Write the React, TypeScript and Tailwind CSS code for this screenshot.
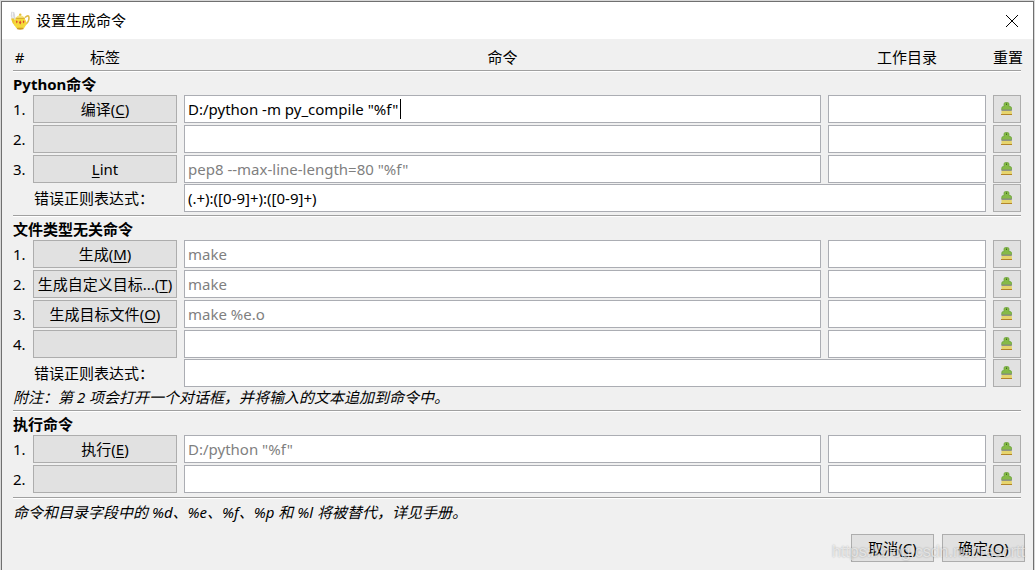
import { useState } from "react";

interface CommandRow {
  label?: string;
  mnemonic?: string;
  command?: string;
  placeholder?: string;
  caret?: boolean;
}

interface CommandSection {
  title: string;
  rows: CommandRow[];
  regex?: string;
  note?: string;
}

const sections: CommandSection[] = [
  {
    title: "Python命令",
    rows: [
      { label: "编译", mnemonic: "C", command: 'D:/python -m py_compile "%f"', caret: true },
      {},
      { label: "Lint", placeholder: 'pep8 --max-line-length=80 "%f"' },
    ],
    regex: "(.+):([0-9]+):([0-9]+)",
  },
  {
    title: "文件类型无关命令",
    rows: [
      { label: "生成", mnemonic: "M", placeholder: "make" },
      { label: "生成自定义目标...", mnemonic: "T", placeholder: "make" },
      { label: "生成目标文件", mnemonic: "O", placeholder: "make %e.o" },
      {},
    ],
    regex: "",
    note: "附注：第 2 项会打开一个对话框，并将输入的文本追加到命令中。",
  },
  {
    title: "执行命令",
    rows: [{ label: "执行", mnemonic: "E", placeholder: 'D:/python "%f"' }, {}],
  },
];

const rowGrid = "grid grid-cols-[13px_144px_1fr_158px_28px] gap-x-[7px]";
const buttonStyle = "h-7 border border-[#adadad] bg-[#e1e1e1] text-center whitespace-nowrap";
const inputStyle =
  "h-7 w-full min-w-0 border border-[#abadb3] bg-white px-[3px] outline-none placeholder:text-[#7f7f7f]";

function TeapotIcon() {
  return (
    <svg viewBox="0 0 20 20" className="h-5 w-5" aria-hidden="true">
      <path d="M1.2 0.8 Q0 4.500 2 8.500 L5.200 8.500 Q5.800 4 4.200 1Z" fill="#d9dade" />
      <path d="M2.5 1.500 Q2 4.500 3.200 7" fill="none" stroke="#f6f6f8" />
      <path d="M15 6.500 Q19 3 19 7 Q18.800 11.500 15 13.500" fill="none" stroke="#dfba45" strokeWidth="1.600" />
      <path d="M1 7.500 L4 7.500 L6 12 L5 15 Q2 12.500 1 7.500Z" fill="#ecc931" />
      <ellipse cx="10.200" cy="12" rx="6.300" ry="6" fill="#f5d93a" />
      <path d="M5.500 7 Q7 4.500 10 4 Q13 4.500 15 7Z" fill="#f8e67c" />
      <circle cx="10.200" cy="3.600" r="1.200" fill="#e5c03a" />
      <path d="M5.500 7.300 H15" stroke="#d0a325" strokeWidth="0.900" />
      <path d="M6.500 18 Q10 19.500 14 18 L13 16.800 H7.500Z" fill="#cf9d20" />
      <path d="M10.200 9.500 L11.400 11.500 L10.200 13.500 L9 11.500Z M6.800 9.200 L7.700 10.800 L6.800 12.400 L5.900 10.800Z M13.600 9.200 L14.500 10.800 L13.600 12.400 L12.700 10.800Z" fill="#dc4630" />
    </svg>
  );
}

function BrushIcon() {
  return (
    <svg viewBox="0 0 12 14" className="mx-auto h-3.5 w-3" aria-hidden="true">
      <path
        d="M3 2 Q3 0.500 4.500 0.500 H6.500 Q8 0.500 8 2 V4.500 H9 Q10.500 4.500 10.500 6 V8 H0.800 V6 Q0.800 4.500 2.300 4.500 H3Z"
        fill="#86ba48"
        stroke="#67a035"
        strokeWidth="0.700"
      />
      <rect x="5" y="1.500" width="1" height="1.500" fill="#3f6d1e" />
      <path d="M0.500 7.500 H10.700 V9 H0.500Z" fill="#8f9382" />
      <path d="M0.500 9 H10.700 L11 12 H0.500Z" fill="#e6d56e" />
      <path d="M0 12 H11 V13 H0Z" fill="#b3842a" />
    </svg>
  );
}

function Separator() {
  return <hr className="h-0.5 border-t border-b border-t-[#a0a0a0] border-b-white" />;
}

function ButtonLabel({ label, mnemonic }: { label: string; mnemonic?: string }) {
  if (!mnemonic) {
    return (
      <>
        <u className="underline-offset-2">{label[0]}</u>
        {label.slice(1)}
      </>
    );
  }
  return (
    <>
      {label}(<u className="underline-offset-2">{mnemonic}</u>)
    </>
  );
}

function ResetButton() {
  return (
    <button type="button" aria-label="重置" className={buttonStyle}>
      <BrushIcon />
    </button>
  );
}

function Row({ row, index }: { row: CommandRow; index: number }) {
  const [command, setCommand] = useState(row.command ?? "");

  return (
    <div className={rowGrid}>
      <span className="leading-7">{index + 1}.</span>
      <button type="button" className={buttonStyle}>
        {row.label && <ButtonLabel label={row.label} mnemonic={row.mnemonic} />}
      </button>
      <div className="relative">
        <input
          type="text"
          aria-label="命令"
          className={inputStyle}
          value={command}
          placeholder={row.placeholder}
          onChange={(e) => setCommand(e.target.value)}
        />
        {row.caret && <span className="absolute top-1 left-[216px] h-5 w-px bg-black" />}
      </div>
      <input type="text" aria-label="工作目录" className={inputStyle} />
      <ResetButton />
    </div>
  );
}

function Section({ section, id }: { section: CommandSection; id: string }) {
  return (
    <section>
      <Separator />
      <h2 className="h-[23px] leading-6 font-bold">{section.title}</h2>
      <div className="flex flex-col gap-0.5">
        {section.rows.map((row, index) => (
          <Row key={index} row={row} index={index} />
        ))}
      </div>
      {section.regex !== undefined && (
        <div className={`${rowGrid} mt-px`}>
          <label htmlFor={id} className="col-start-2 pl-px leading-7">
            错误正则表达式：
          </label>
          <input id={id} type="text" className={`${inputStyle} col-span-2`} defaultValue={section.regex} />
          <ResetButton />
        </div>
      )}
      {section.note && <p className="h-5 leading-5 italic">{section.note}</p>}
    </section>
  );
}

export default function App() {
  return (
    <div className="min-h-screen bg-[#d8d8d8] px-px pt-px font-['Noto_Sans','Noto_Sans_CJK_SC',sans-serif] text-[15px] text-black">
      <main className="flex min-h-[calc(100vh-1px)] flex-col border border-b-0 border-[#707070] bg-[#f0f0f0]">
        <header className="flex h-[37px] items-center bg-white pr-2.5 pl-2">
          <TeapotIcon />
          <h1 className="ml-1.5 flex-1">设置生成命令</h1>
          <button type="button" aria-label="关闭" className="p-1">
            <svg viewBox="0 0 14 14" className="h-3.5 w-3.5" fill="none" stroke="#000" aria-hidden="true">
              <path d="M1 1 L13 13 M13 1 L1 13" />
            </svg>
          </button>
        </header>
        <div className="pr-3 pl-[11px]">
          <div className={`${rowGrid} h-[31px] text-center leading-9 whitespace-nowrap`}>
            <span>#</span>
            <span>标签</span>
            <span>命令</span>
            <span>工作目录</span>
            <span>重置</span>
          </div>
          <div className="flex flex-col gap-[3px]">
            {sections.map((section, index) => (
              <Section key={section.title} section={section} id={`regex-${index}`} />
            ))}
          </div>
          <div className="pt-1">
            <Separator />
          </div>
          <p className="mt-px leading-6 italic">命令和目录字段中的 %d、%e、%f、%p 和 %l 将被替代，详见手册。</p>
        </div>
        <footer className="relative mt-2.5 flex justify-end gap-2 pr-2">
          <button type="button" className={`${buttonStyle} w-[83px]`}>
            <ButtonLabel label="取消" mnemonic="C" />
          </button>
          <button type="button" className={`${buttonStyle} w-[83px]`}>
            <ButtonLabel label="确定" mnemonic="O" />
          </button>
          <span className="pointer-events-none absolute top-1.5 right-2 font-['Liberation_Sans',sans-serif] text-base leading-6 text-white/60 text-shadow-[0_0_2px_#00000050]">
            https://blog.csdn.net/resortt
          </span>
        </footer>
      </main>
    </div>
  );
}
